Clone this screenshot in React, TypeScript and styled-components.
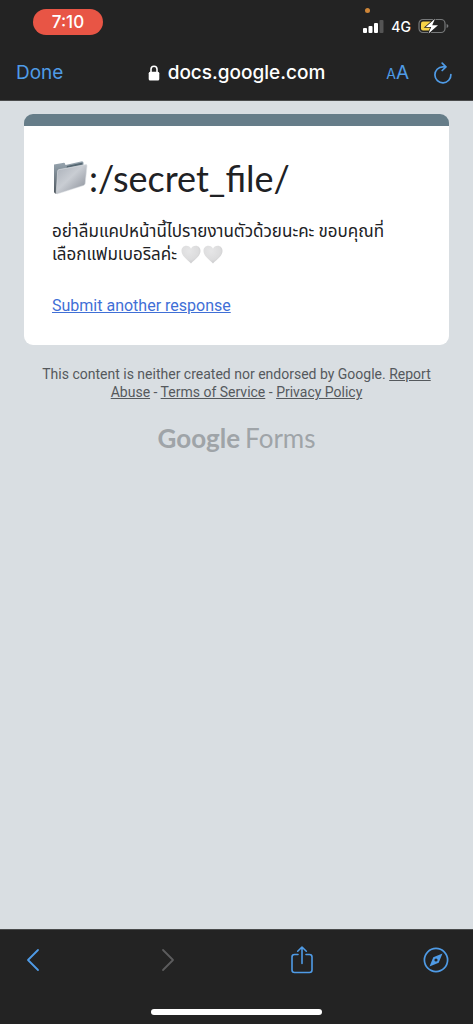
import React from "react";
import styled, { createGlobalStyle } from "styled-components";

const GlobalStyle = createGlobalStyle`
  *, *::before, *::after { box-sizing: border-box; }
  body { margin: 0; background: #d9dee2; }
  button { border: 0; padding: 0; background: none; font: inherit; color: inherit; cursor: pointer; }
  svg { display: block; }
`;

const ui = `Inter, "Liberation Sans", sans-serif`;
const body = `Roboto, "Noto Sans Thai", "Noto Sans", sans-serif`;

const Screen = styled.div`
  min-height: 100vh;
  display: flex;
  flex-direction: column;
  background: #d9dee2;
  font-family: ${body};
`;

const TopChrome = styled.header`
  background: #232323;
  color: #fff;
  font-family: ${ui};
  border-bottom: 1px solid #4a4b4c;
`;

const StatusBar = styled.div`
  display: flex;
  justify-content: space-between;
  align-items: flex-start;
  height: 44px;
  padding: 9px 24px 0 33px;
`;

const TimePill = styled.time`
  width: 70px;
  height: 26px;
  border-radius: 13px;
  background: #e85545;
  font-size: 17px;
  font-weight: 500;
  line-height: 26px;
  text-align: center;
`;

const StatusIcons = styled.div`
  position: relative;
  display: flex;
  align-items: center;
  gap: 7px;
  height: 34px;
  font-size: 14px;
  font-weight: 500;
`;

const MicDot = styled.span`
  position: absolute;
  top: -1px;
  left: 2px;
  width: 5px;
  height: 5px;
  border-radius: 50%;
  background: #cf8638;
`;

const NavBar = styled.nav`
  display: grid;
  grid-template-columns: 1fr auto 1fr;
  align-items: center;
  height: 56px;
  padding: 2px 16px 0;
`;

const TextButton = styled.button`
  justify-self: start;
  && { color: #4f9be6; }
  font-size: 19px;
  line-height: 24px;
`;

const DoneButton = styled(TextButton)`
  && { font-size: 19px; }
`;

const Address = styled.div`
  display: flex;
  align-items: center;
  gap: 8px;
  font-size: 19px;
  font-weight: 500;
  line-height: 24px;
`;

const NavActions = styled.div`
  display: flex;
  justify-content: flex-end;
  align-items: center;
  gap: 24px;
  padding-right: 4px;
`;

const SmallA = styled.span`
  font-size: 14px;
`;

const Page = styled.main`
  flex: 1;
  padding: 13px 24px 0;
`;

const Card = styled.section`
  overflow: hidden;
  border-radius: 9px;
  background: #fff;
  border-top: 12px solid #667d89;
  padding: 28px 28px 28px;
`;

const Title = styled.h1`
  display: flex;
  align-items: center;
  margin: 0;
  color: #202124;
  font-family: Lato, sans-serif;
  font-size: 36px;
  font-weight: 400;
  line-height: 48px;
`;

const Message = styled.p`
  margin: 18px 0 0;
  padding-right: 16px;
  color: #202124;
  font-size: 17px;
  line-height: 23px;
`;

const Hearts = styled.span`
  display: inline-flex;
  gap: 2px;
  vertical-align: -4px;
`;

const SubmitLink = styled.a`
  display: inline-block;
  margin-top: 29px;
  color: #3f6fd6;
  font-size: 16px;
  line-height: 22px;
`;

const Disclaimer = styled.p`
  margin: 20px 12px 0;
  color: #55595d;
  font-size: 14px;
  line-height: 18px;
  text-align: center;
  a { color: inherit; }
`;

const Brand = styled.a`
  display: flex;
  justify-content: center;
  align-items: baseline;
  gap: 5px;
  margin-top: 21px;
  color: #9fa4a8;
  font-family: Lato, sans-serif;
  font-size: 26px;
  line-height: 32px;
  text-decoration: none;
`;

const BrandName = styled.span`
  font-weight: 700;
`;

const BottomChrome = styled.footer`
  height: 95px;
  background: #232323;
  border-top: 1px solid #4a4b4c;
  display: flex;
  flex-direction: column;
  justify-content: space-between;
  align-items: center;
  padding-bottom: 9px;
`;

const Toolbar = styled.div`
  width: 100%;
  display: flex;
  justify-content: space-between;
  align-items: center;
  height: 60px;
  padding: 0 24px 0 20px;
`;

const HomeIndicator = styled.div`
  width: 36%;
  height: 6px;
  border-radius: 3px;
  background: #fff;
`;

const blue = "#4f9be6";

const Signal = () => (
  <svg width="21" height="14" viewBox="0 0 21 14" aria-hidden="true">
    <rect x="0" y="9" width="4" height="5" rx="1" fill="#fff" />
    <rect x="5.5" y="7" width="4" height="7" rx="1" fill="#fff" />
    <rect x="11" y="4" width="4" height="10" rx="1" fill="#fff" />
    <rect x="16.5" y="1" width="4" height="13" rx="1" fill="#555" />
  </svg>
);

const Battery = () => (
  <svg width="31" height="16" viewBox="0 0 31 16" aria-hidden="true">
    <rect x="1" y="1.5" width="26" height="13" rx="4" fill="none" stroke="#77797a" strokeWidth="1.2" />
    <path d="M28.6 6v4q1.8-.6 1.8-2t-1.8-2z" fill="#77797a" />
    <path d="M5 3.500h8v9H5q-2 0-2-2v-5q0-2 2-2z" fill="#f6d347" />
    <path d="M17 .8L7.800 9h5.400l-2.700 6.600L20 7.300h-5.800z" fill="#fff" stroke="#232323" strokeWidth="1.600" paintOrder="stroke" />
  </svg>
);

const Lock = () => (
  <svg width="12" height="16" viewBox="0 0 12 16" aria-hidden="true">
    <path d="M3 8V4.300a3 3 0 0 1 6 0V8" fill="none" stroke="#fff" strokeWidth="1.600" />
    <rect x="0.700" y="6.800" width="10.600" height="8.700" rx="1.500" fill="#fff" />
  </svg>
);

const Reload = () => (
  <svg width="20" height="22" viewBox="0 0 20 22" fill="none" stroke={blue} strokeWidth="1.700" strokeLinecap="round" strokeLinejoin="round" aria-hidden="true">
    <path d="M12.500 4.800H9.800A8 8 0 1 0 17.900 12.500" />
    <path d="M9.200 1.200l3.700 3.600-3.700 3.700" />
  </svg>
);

const Folder = () => (
  <svg width="37" height="36" viewBox="0 0 37 36" aria-hidden="true">
    <defs>
      <linearGradient id="front" x1="0" y1="0" x2="1" y2="1">
        <stop offset="0" stopColor="#a9afb8" />
        <stop offset=".45" stopColor="#c9cdd3" />
        <stop offset="1" stopColor="#858a94" />
      </linearGradient>
      <linearGradient id="back" x1="0" y1="0" x2="0" y2="1">
        <stop offset="0" stopColor="#9aa8b2" />
        <stop offset="1" stopColor="#4d565e" />
      </linearGradient>
    </defs>
    <path d="M2 4.500l10-1.800q1 0 1.500 2.200L30 1.200q1.500 0 1.500 1.500V25L4 33.800q-2-.5-2-2z" fill="url(#back)" />
    <path d="M15 6L30.500 2.500v2L14.500 8z" fill="#566873" />
    <path d="M7 9.600L34 4.600q1.200 0 1 1.400l-1.800 17.500q-.2 1.500-1.700 2L5.500 33.800q-1.500.2-1.300-1.500L5.700 11q.1-1.200 1.300-1.400z" fill="url(#front)" stroke="#dde0e4" strokeWidth=".6" />
  </svg>
);

const Heart = () => (
  <svg width="20" height="19" viewBox="0 0 20 19" aria-hidden="true">
    <defs>
      <radialGradient id="heart" cx=".4" cy=".3" r=".75">
        <stop offset="0" stopColor="#e6e6e7" />
        <stop offset=".65" stopColor="#dcdcdd" />
        <stop offset="1" stopColor="#c6c6c8" />
      </radialGradient>
    </defs>
    <path d="M10 18.500C7.500 15.500.5 11.500.5 6 .5 3 2.600.8 5.300.8 7.500.8 9.300 2 10 3.800 10.700 2 12.500.8 14.700.8c2.700 0 4.800 2.200 4.800 5.200 0 5.500-7 9.500-9.500 12.500z" fill="url(#heart)" />
  </svg>
);

const Chevron = ({ back }: { back?: boolean }) => (
  <svg width="26" height="24" viewBox="0 0 26 24" fill="none" stroke={back ? blue : "#5c5c5d"} strokeWidth="1.800" strokeLinecap="round" strokeLinejoin="round" aria-hidden="true">
    <path d={back ? "M18 2L8 12l10 10" : "M8 2l10 10L8 22"} />
  </svg>
);

const Share = () => (
  <svg width="24" height="30" viewBox="0 0 24 30" fill="none" stroke={blue} strokeWidth="1.600" strokeLinecap="round" strokeLinejoin="round" aria-hidden="true">
    <path d="M8 9.500H4.500Q2 9.500 2 12v13q0 2.500 2.500 2.500h15Q22 27.500 22 25V12q0-2.500-2.500-2.500H16" />
    <path d="M12 18.500V2M7.700 6.200L12 2l4.300 4.200" />
  </svg>
);

const Compass = () => (
  <svg width="26" height="26" viewBox="0 0 26 26" aria-hidden="true">
    <circle cx="13" cy="13" r="11.600" fill="none" stroke={blue} strokeWidth="1.700" />
    <path fillRule="evenodd" d="M19.500 6.500l-3.800 9.200L6.500 19.500l3.800-9.200zM13 11.400a1.600 1.600 0 1 0 0 3.200 1.600 1.600 0 0 0 0-3.200z" fill={blue} />
  </svg>
);

export default function App() {
  return (
    <Screen>
      <GlobalStyle />
      <TopChrome>
        <StatusBar>
          <TimePill>7:10</TimePill>
          <StatusIcons>
            <MicDot />
            <Signal />
            <span>4G</span>
            <Battery />
          </StatusIcons>
        </StatusBar>
        <NavBar>
          <DoneButton type="button">Done</DoneButton>
          <Address>
            <Lock />
            <span>docs.google.com</span>
          </Address>
          <NavActions>
            <TextButton type="button" aria-label="Text size">
              <SmallA>A</SmallA>A
            </TextButton>
            <button type="button" aria-label="Reload">
              <Reload />
            </button>
          </NavActions>
        </NavBar>
      </TopChrome>

      <Page>
        <Card>
          <Title>
            <Folder />
            <span>:/secret_file/</span>
          </Title>
          <Message lang="th">
            อย่าลืมแคปหน้านี้ไปรายงานตัวด้วยนะคะ ขอบคุณที่เลือกแฟมเบอริลค่ะ{" "}
            <Hearts>
              <Heart />
              <Heart />
            </Hearts>
          </Message>
          <SubmitLink href="#">Submit another response</SubmitLink>
        </Card>
        <Disclaimer>
          This content is neither created nor endorsed by Google. <a href="#">Report Abuse</a> -{" "}
          <a href="#">Terms of Service</a> - <a href="#">Privacy Policy</a>
        </Disclaimer>
        <Brand href="#">
          <BrandName>Google</BrandName>
          <span>Forms</span>
        </Brand>
      </Page>

      <BottomChrome>
        <Toolbar>
          <button type="button" aria-label="Back">
            <Chevron back />
          </button>
          <button type="button" aria-label="Forward" disabled>
            <Chevron />
          </button>
          <button type="button" aria-label="Share">
            <Share />
          </button>
          <button type="button" aria-label="Open in Safari">
            <Compass />
          </button>
        </Toolbar>
        <HomeIndicator />
      </BottomChrome>
    </Screen>
  );
}
